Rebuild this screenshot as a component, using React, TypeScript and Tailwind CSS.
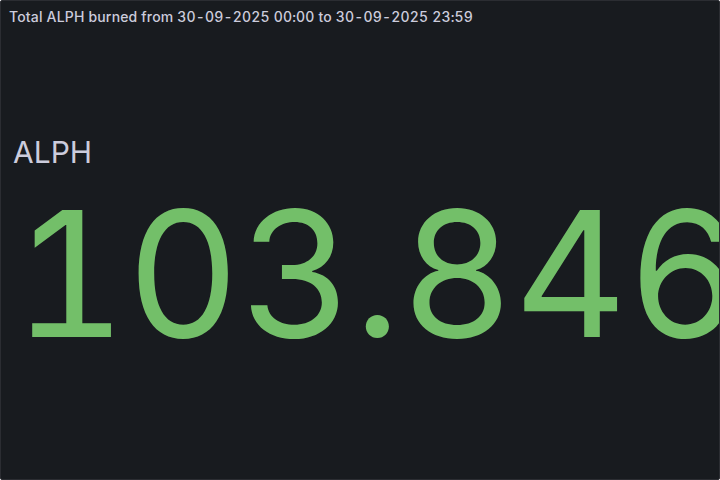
export default function App() {
  return (
    <div
      className="w-[720px] h-[480px] bg-[#181b1f] border border-[#2b2d32] rounded-[2px] overflow-hidden flex flex-col tabular-nums"
      style={{ fontFamily: "Inter, 'Noto Sans', sans-serif" }}
    >
      <div className="h-[31px] flex items-center px-[8px] text-[14px] font-medium tracking-[0.17px] text-[#ccccdc] whitespace-nowrap">
        Total ALPH burned from 30-09-2025 00:00 to 30-09-2025 23:59
      </div>
      <div className="flex-1 flex flex-col pt-[105px] pl-[12px]">
        <div className="text-[30px] leading-none text-[#ccccdc]">ALPH</div>
        <div className="mt-[19px] text-[175px] leading-none text-[#73bf69] whitespace-nowrap">
          103.846
        </div>
      </div>
    </div>
  );
}
